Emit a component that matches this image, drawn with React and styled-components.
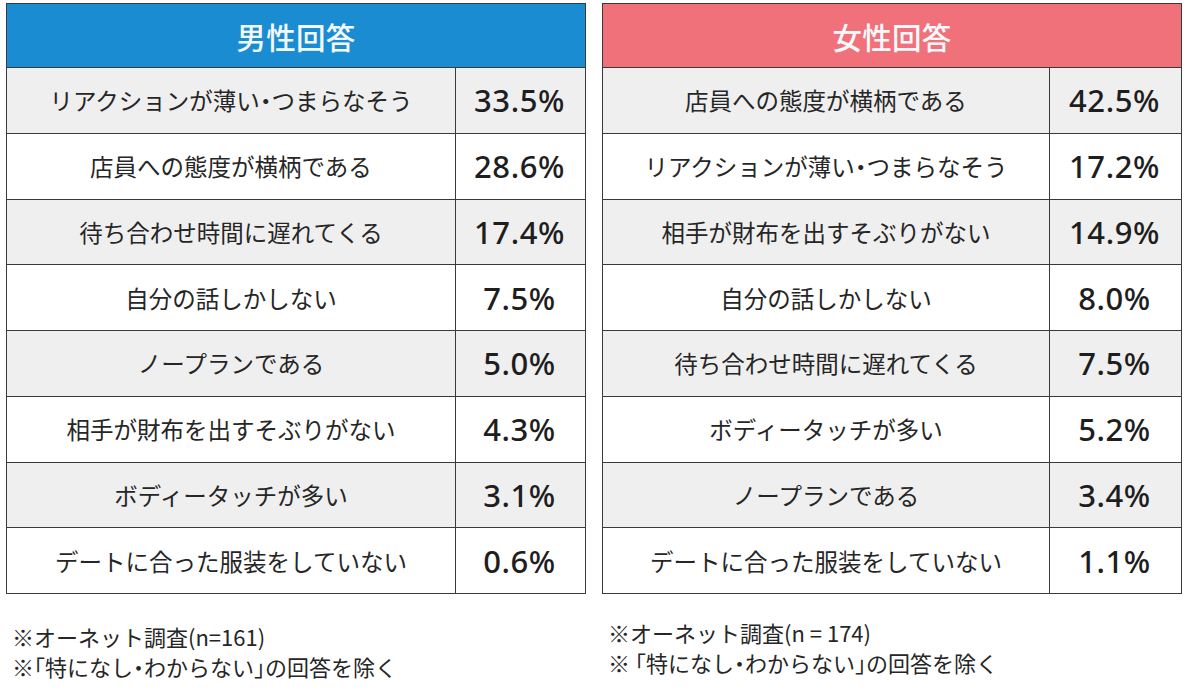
import React from "react";
import styled, { createGlobalStyle } from "styled-components";

const Global = createGlobalStyle`
  html, body { margin: 0; padding: 0; background: #ffffff; }
  body { font-family: "Noto Sans CJK JP", "Noto Sans", sans-serif; color: #222; }
`;

const Page = styled.div`
  display: grid;
  grid-template-columns: 580px 580px;
  column-gap: 16px;
  padding: 3px 0 0 6px;
  width: 1185px;
  height: 691px;
  box-sizing: border-box;
`;

const Panel = styled.section`
  display: flex;
  flex-direction: column;
`;

const Table = styled.div`
  display: grid;
  grid-template-columns: ${(p) => p.$labelWidth}px 1fr;
  border: 1px solid #3a3a3a;
  box-sizing: border-box;
`;

const Header = styled.div`
  grid-column: 1 / -1;
  height: 63px;
  background: ${(p) => p.$color};
  color: #f4f8fb;
  display: flex;
  align-items: center;
  justify-content: center;
  font-size: 29.5px;
  font-weight: 500;
  letter-spacing: 0.3px;
`;

const Cell = styled.div`
  height: 65.75px;
  box-sizing: border-box;
  border-top: 1px solid #3a3a3a;
  background: ${(p) => (p.$shaded ? "#efefef" : "#ffffff")};
  display: flex;
  align-items: center;
  justify-content: center;
`;

const Label = styled(Cell)`
  font-size: 23.5px;
  font-weight: 400;
  color: #262626;
  white-space: nowrap;
`;

const Value = styled(Cell)`
  border-left: 1px solid #3a3a3a;
  font-family: "Noto Sans", "Noto Sans CJK JP", sans-serif;
  font-size: 31px;
  font-weight: 500;
  letter-spacing: 0.6px;
  color: #1e1e1e;
  padding-right: 2px;
`;

const Notes = styled.div`
  margin-top: ${(p) => p.$top}px;
  padding-left: 6px;
  font-size: 22px;
  line-height: 30px;
  color: #262626;
  white-space: nowrap;
`;

const Half = styled.span`
  font-feature-settings: "halt";
`;

const withHalfDots = (text) =>
  text.split("・").flatMap((part, i) =>
    i === 0 ? [part] : [<Half key={i}>・</Half>, part]
  );

const men = [
  ["リアクションが薄い・つまらなそう", "33.5%"],
  ["店員への態度が横柄である", "28.6%"],
  ["待ち合わせ時間に遅れてくる", "17.4%"],
  ["自分の話しかしない", "7.5%"],
  ["ノープランである", "5.0%"],
  ["相手が財布を出すそぶりがない", "4.3%"],
  ["ボディータッチが多い", "3.1%"],
  ["デートに合った服装をしていない", "0.6%"],
];

const women = [
  ["店員への態度が横柄である", "42.5%"],
  ["リアクションが薄い・つまらなそう", "17.2%"],
  ["相手が財布を出すそぶりがない", "14.9%"],
  ["自分の話しかしない", "8.0%"],
  ["待ち合わせ時間に遅れてくる", "7.5%"],
  ["ボディータッチが多い", "5.2%"],
  ["ノープランである", "3.4%"],
  ["デートに合った服装をしていない", "1.1%"],
];

function Ranking({ title, color, rows, labelWidth, notes, notesTop }) {
  return (
    <Panel>
      <Table $labelWidth={labelWidth}>
        <Header $color={color}>{title}</Header>
        {rows.map(([label, value], i) => (
          <React.Fragment key={label}>
            <Label $shaded={i % 2 === 0}>{withHalfDots(label)}</Label>
            <Value $shaded={i % 2 === 0}>{value}</Value>
          </React.Fragment>
        ))}
      </Table>
      <Notes $top={notesTop}>{notes}</Notes>
    </Panel>
  );
}

export default function App() {
  return (
    <>
      <Global />
      <Page>
        <Ranking
          title="男性回答"
          color="#1a8dd2"
          rows={men}
          labelWidth={448}
          notesTop={27}
          notes={
            <>
              <div>※オーネット調査(n=161)</div>
              <div>
                ※<Half>「</Half>特になし<Half>・</Half>わからない<Half>」</Half>の回答を除く
              </div>
            </>
          }
        />
        <Ranking
          title="女性回答"
          color="#f0717a"
          rows={women}
          labelWidth={446}
          notesTop={23}
          notes={
            <>
              <div>※オーネット調査(n = 174)</div>
              <div>
                ※ <Half>「</Half>特になし<Half>・</Half>わからない<Half>」</Half>の回答を除く
              </div>
            </>
          }
        />
      </Page>
    </>
  );
}
